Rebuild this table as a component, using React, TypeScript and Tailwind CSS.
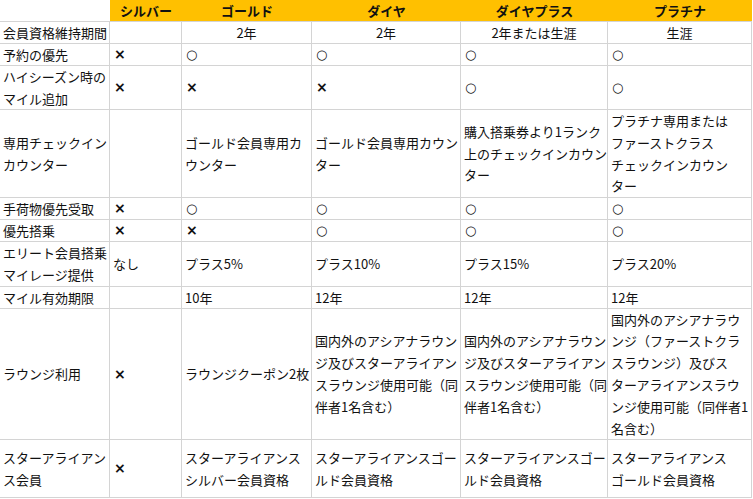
const headers = ["シルバー", "ゴールド", "ダイヤ", "ダイヤプラス", "プラチナ"];

type Row = {
  label: string[];
  cells: string[][];
  h: string;
  center?: boolean;
};

const rows: Row[] = [
  {
    label: ["会員資格維持期間"],
    cells: [[""], ["2年"], ["2年"], ["2年または生涯"], ["生涯"]],
    h: "h-[22px]",
    center: true
  },
  {
    label: ["予約の優先"],
    cells: [["×"], ["○"], ["○"], ["○"], ["○"]],
    h: "h-[22px]"
  },
  {
    label: ["ハイシーズン時の", "マイル追加"],
    cells: [["×"], ["×"], ["×"], ["○"], ["○"]],
    h: "h-[44px]"
  },
  {
    label: ["専用チェックイン", "カウンター"],
    cells: [
      [""],
      ["ゴールド会員専用カ", "ウンター"],
      ["ゴールド会員専用カウン", "ター"],
      ["購入搭乗券より1ランク", "上のチェックインカウン", "ター"],
      ["プラチナ専用または", "ファーストクラス", "チェックインカウン", "ター"]
    ],
    h: "h-[88px]"
  },
  {
    label: ["手荷物優先受取"],
    cells: [["×"], ["○"], ["○"], ["○"], ["○"]],
    h: "h-[22px]"
  },
  {
    label: ["優先搭乗"],
    cells: [["×"], ["×"], ["○"], ["○"], ["○"]],
    h: "h-[22px]"
  },
  {
    label: ["エリート会員搭乗", "マイレージ提供"],
    cells: [["なし"], ["プラス5%"], ["プラス10%"], ["プラス15%"], ["プラス20%"]],
    h: "h-[45px]"
  },
  {
    label: ["マイル有効期限"],
    cells: [[""], ["10年"], ["12年"], ["12年"], ["12年"]],
    h: "h-[22px]"
  },
  {
    label: ["ラウンジ利用"],
    cells: [
      ["×"],
      ["ラウンジクーポン2枚"],
      ["国内外のアシアナラウン", "ジ及びスターアライアン", "スラウンジ使用可能（同", "伴者1名含む）"],
      ["国内外のアシアナラウン", "ジ及びスターアライアン", "スラウンジ使用可能（同", "伴者1名含む）"],
      [
        "国内外のアシアナラウ",
        "ンジ（ファーストクラ",
        "スラウンジ）及びス",
        "ターアライアンスラウ",
        "ンジ使用可能（同伴者1",
        "名含む）"
      ]
    ],
    h: "h-[131px]"
  },
  {
    label: ["スターアライアン", "ス会員"],
    cells: [
      ["×"],
      ["スターアライアンス", "シルバー会員資格"],
      ["スターアライアンスゴー", "ルド会員資格"],
      ["スターアライアンスゴー", "ルド会員資格"],
      ["スターアライアンス", "ゴールド会員資格"]
    ],
    h: "h-[58px]"
  }
];

// ○ and × are drawn in DejaVu so they come out smaller and darker, like the original
const Mark = ({ v }: { v: string }) =>
  v === "×" ? (
    <span className="font-['DejaVu_Sans'] font-bold text-[14px] pl-[1px]">×</span>
  ) : (
    <span className="font-['DejaVu_Sans'] text-[13px] pl-[1px]">○</span>
  );

const Lines = ({ lines }: { lines: string[] }) => (
  <div className="whitespace-nowrap">
    {lines.map((l, i) => (
      <div key={i}>{l === "×" || l === "○" ? <Mark v={l} /> : l}</div>
    ))}
  </div>
);

export default function App() {
  return (
    <div
      className="w-[753px] h-[499px] bg-white text-[13px] leading-[21.8px] text-[#111] overflow-hidden"
      style={{ fontFamily: '"Noto Sans CJK JP", "Noto Sans", sans-serif' }}
    >
      <div className="grid grid-cols-[110px_72px_130px_149px_147px_144px]">
        <div className="h-[22px] border-b border-[#d4d4d4]" />
        {headers.map((h) => (
          <div
            key={h}
            className="h-[22px] bg-[#ffc000] border-b border-[#d4d4d4] flex items-center justify-center font-bold"
          >
            {h}
          </div>
        ))}

        {rows.map((r, ri) => (
          <div key={ri} className="contents">
            <div
              className={`${r.h} border-r border-b border-[#d4d4d4] flex items-center pl-[3px]`}
            >
              <Lines lines={r.label} />
            </div>
            {r.cells.map((c, ci) => (
              <div
                key={ci}
                className={`${r.h} border-r border-b border-[#d4d4d4] flex items-center ${
                  r.center ? "justify-center" : "pl-[3px]"
                }`}
              >
                <Lines lines={c} />
              </div>
            ))}
          </div>
        ))}
      </div>
    </div>
  );
}
